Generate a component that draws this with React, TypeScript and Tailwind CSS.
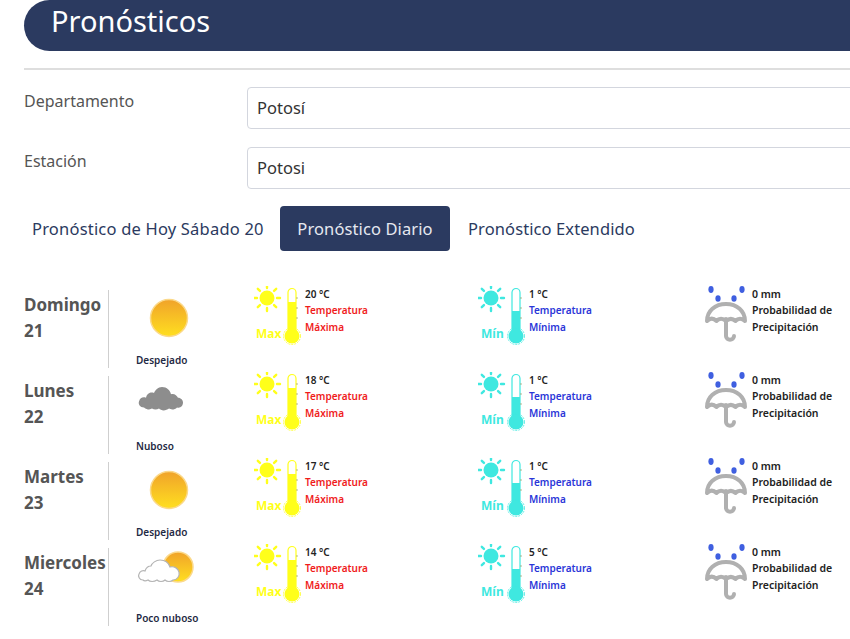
const DAYS = [
  { name: "Domingo", num: 21, sky: "sun", label: "Despejado", max: 20, min: 1 },
  { name: "Lunes", num: 22, sky: "cloud", label: "Nuboso", max: 18, min: 1 },
  { name: "Martes", num: 23, sky: "sun", label: "Despejado", max: 17, min: 1 },
  { name: "Miercoles", num: 24, sky: "partly", label: "Poco nuboso", max: 14, min: 5 },
];

const RAYS = [0, 45, 90, 135, 180, 225, 270, 315];

function SunDisc({ cx, cy, r, id }: { cx: number; cy: number; r: number; id: string }) {
  return (
    <>
      <defs>
        <linearGradient id={id} x1="0" y1="0" x2="0" y2="1">
          <stop offset="0" stopColor="#f0a32a" />
          <stop offset="1" stopColor="#ffdf20" />
        </linearGradient>
      </defs>
      <circle cx={cx} cy={cy} r={r} fill={`url(#${id})`} stroke="#fbd98a" strokeWidth="1.5" />
    </>
  );
}

function SkyIcon({ sky, id }: { sky: string; id: string }) {
  return (
    <svg width="66" height="50" viewBox="0 0 66 50" className="block">
      {sky === "sun" && <SunDisc cx={39} cy={26} r={18.5} id={id} />}
      {sky === "cloud" && (
        <path
          transform="translate(7 -15) scale(1 1.2)"
          d="M7 37c-4 0-6-3-5-5 1-3 4-4 7-3 1-4 5-5 8-4 1-2 4-5 8-5 5 0 8 3 9 6 3-1 6 1 7 3 3 0 5 2 5 4 0 3-3 5-6 4-2 2-6 2-8 1-3 2-8 2-10 0-2 1-5 1-7 0-2 1-5 1-8-1z"
          fill="#8d8d8d"
        />
      )}
      {sky === "partly" && (
        <>
          <SunDisc cx={48} cy={17} r={15} id={id} />
          <path
            transform="translate(7 -13)"
            d="M6 43c-4 0-5-4-4-6 1-3 4-4 6-3 1-3 3-5 6-5 1-3 5-6 9-6 6 0 9 4 10 7 4-1 8 1 9 5 1 4-2 8-6 8-2 2-6 2-8 0-2 2-6 2-8 0-3 2-7 2-9 0-2 1-4 1-5 0z"
            fill="#ffffff"
            stroke="#b4b4b4"
            strokeWidth="1.2"
          />
        </>
      )}
    </svg>
  );
}

function ThermoIcon({ color, tag, level, tagX }: { color: string; tag: string; level: number; tagX: number }) {
  return (
    <svg width="52" height="60" viewBox="0 0 52 60" className="block shrink-0">
      <g stroke={color} strokeWidth="2.4" strokeLinecap="round">
        {RAYS.map((a) => (
          <line key={a} x1="13" y1="3" x2="13" y2="0" transform={`rotate(${a} 13 12) translate(0 -1)`} />
        ))}
      </g>
      <circle cx="13" cy="12" r="7.5" fill={color} />
      <path d="M34 45V6.500a4 4 0 0 1 8 0v38.500" fill="none" stroke={color} strokeWidth="1.2" />
      <rect x="34" y={level} width="8" height={48 - level} fill={color} />
      <circle cx="38" cy="50" r="7.5" fill={color} />
      <circle cx="38" cy="50" r="8.500" fill="none" stroke={color} strokeWidth="0.8" strokeDasharray="2 1" />
      <g stroke="#9a9a60" strokeWidth="0.7">
        <line x1="42" y1="12" x2="44" y2="12" />
        <line x1="42" y1="22" x2="44" y2="22" />
        <line x1="42" y1="32" x2="44" y2="32" />
      </g>
      <text x={tagX} y="52" fill={color} fontSize="12" fontWeight="700" fontFamily="'Noto Sans', sans-serif">
        {tag}
      </text>
    </svg>
  );
}

function UmbrellaIcon() {
  return (
    <svg width="48" height="60" viewBox="0 0 48 60" className="block shrink-0">
      <g fill="#3f5fe0">
        <ellipse cx="7" cy="3.500" rx="2.600" ry="3.400" />
        <ellipse cx="38" cy="3.500" rx="2.600" ry="3.400" />
        <ellipse cx="14" cy="12.500" rx="2.600" ry="3.200" />
        <ellipse cx="30" cy="12.500" rx="2.600" ry="3.200" />
      </g>
      <path
        d="M3 35c0-10 8-17 19-17s19 7 19 17c-3-3-7-3-9.500 0-3-3-6-3-9.500 0-3-3-7-3-9.500 0-3-3-6.500-3-9.500 0z"
        fill="none"
        stroke="#b0b0b0"
        strokeWidth="4"
        strokeLinejoin="round"
      />
      <path d="M22 33v17c0 5 8 5 8 0" fill="none" stroke="#b0b0b0" strokeWidth="4" strokeLinecap="round" />
    </svg>
  );
}

function ForecastRow({ day, index }: { day: (typeof DAYS)[number]; index: number }) {
  return (
    <div className="flex h-[78px] items-start">
      <div className="flex h-full w-[85px] flex-col border-r border-[#cfcfcf] pt-[2px] text-[17px] font-bold leading-[26px] text-[#555555]">
        <span>{day.name}</span>
        <span>{day.num}</span>
      </div>
      <div className="flex h-full w-[118px] flex-col justify-between pb-[2px] pl-[21px]">
        <div className="mt-[2px]">
          <SkyIcon sky={day.sky} id={`sky-${index}`} />
        </div>
        <span className="pl-[6px] text-[10px] font-semibold leading-[12px] text-[#1f2a44]">{day.label}</span>
      </div>
      <div className="-mt-[4px] flex w-[224px] pl-[27px]">
        <ThermoIcon color="#ffff1a" tag="Max" level={16} tagX={2} />
        <div className="-ml-[1px] text-[10px] font-semibold leading-[16.5px]">
          <div className="text-[#222222]">{day.max} °C</div>
          <div className="text-[#f01c1c]">Temperatura</div>
          <div className="text-[#f01c1c]">Máxima</div>
        </div>
      </div>
      <div className="-mt-[4px] flex w-[252px] pl-[27px]">
        <ThermoIcon color="#3fe8e0" tag="Mín" level={25} tagX={3} />
        <div className="-ml-[1px] text-[10px] font-semibold leading-[16.5px]">
          <div className="text-[#222222]">{day.min} °C</div>
          <div className="text-[#2a36d8]">Temperatura</div>
          <div className="text-[#2a36d8]">Mínima</div>
        </div>
      </div>
      <div className="-mt-[4px] flex pl-[1px]">
        <UmbrellaIcon />
        <div className="text-[10.5px] font-semibold leading-[16.5px] text-[#222222]">
          <div>0 mm</div>
          <div className="whitespace-nowrap">Probabilidad de</div>
          <div>Precipitación</div>
        </div>
      </div>
    </div>
  );
}

function Field({ label, value }: { label: string; value: string }) {
  return (
    <div className="flex items-start">
      <label className="w-[223px] shrink-0 pt-[2px] text-[16px] leading-[24px] text-[#555555]">{label}</label>
      <div className="flex h-[41.5px] w-[640px] shrink-0 items-center rounded-[4px] border border-[#d3d6de] pl-[9px] pt-[2px] text-[16.5px] text-[#333333]">
        {value}
      </div>
    </div>
  );
}

export default function App() {
  return (
    <div className="h-[639px] w-[850px] overflow-hidden bg-white pl-[24px] font-['Noto_Sans',sans-serif]">
      <div className="flex h-[51px] w-[840px] items-center rounded-l-[26px] bg-[#2b3a60] pb-[10px] pl-[27px] text-[29px] text-white">
        Pronósticos
      </div>
      <div className="mt-[17px] h-[2px] w-[840px] bg-[#dedede]" />
      <div className="mt-[17px] flex flex-col gap-[18.5px]">
        <Field label="Departamento" value="Potosí" />
        <Field label="Estación" value="Potosi" />
      </div>
      <div className="mt-[17px] flex h-[45px] items-center text-[16.5px] tracking-[0.1px] text-[#2b3a60]">
        <span className="ml-[8px] w-[248px] whitespace-nowrap pt-[2px] tracking-[0.2px]">Pronóstico de Hoy Sábado 20</span>
        <span className="flex h-[45px] w-[170px] items-center justify-center rounded-[4px] bg-[#2b3a60] pt-[2px] text-[#e5e8f0]">
          Pronóstico Diario
        </span>
        <span className="ml-[18px] whitespace-nowrap pt-[2px]">Pronóstico Extendido</span>
      </div>
      <div className="mt-[39px] flex flex-col gap-[8px]">
        {DAYS.map((day, i) => (
          <ForecastRow key={day.name} day={day} index={i} />
        ))}
      </div>
    </div>
  );
}
